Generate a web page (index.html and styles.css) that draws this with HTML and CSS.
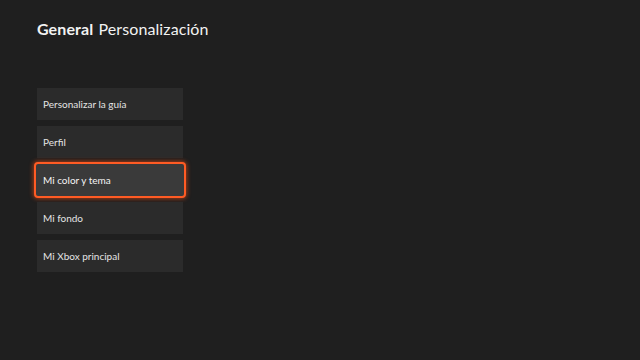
FILE: index.html
```html
<!DOCTYPE html>
<html lang="es">
<head>
  <meta charset="UTF-8" />
  <title>Personalización</title>
  <link rel="stylesheet" href="styles.css">
</head>
<body>
  <div class="screen">
    <h1 class="title"><span class="title-main">General</span> Personalización</h1>

    <nav class="menu">
      <div class="tile">Personalizar la guía</div>
      <div class="tile">Perfil</div>
      <div class="tile tile-focus">Mi color y tema</div>
      <div class="tile">Mi fondo</div>
      <div class="tile">Mi Xbox principal</div>
    </nav>
  </div>
</body>
</html>
```

FILE: styles.css
```css
html, body {
  margin: 0;
  height: 100%;
  background: #1f1f1f;
}
body {
  font-family: 'Lato', 'Noto Sans', sans-serif;
  color: #ececec;
}
.screen {
  padding: 16px 0 0 37px;
}
.title {
  margin: 0;
  font-size: 16px;
  font-weight: 400;
  line-height: 25px;
  letter-spacing: 0.1px;
  word-spacing: 1px;
  color: #f2f2f2;
}
.title-main {
  font-weight: 700;
}
.menu {
  margin-top: 47px;
  width: 146px;
  display: flex;
  flex-direction: column;
  gap: 6px;
}
.tile {
  height: 32px;
  box-sizing: border-box;
  padding: 0 6px;
  display: flex;
  align-items: center;
  background: #2b2b2b;
  font-size: 10px;
  color: #e4e4e4;
}
.tile-focus {
  margin: -2px -3px;
  height: 36px;
  padding-left: 7px;
  background: #3a3a3a;
  border: 2px solid #ff5b24;
  border-radius: 4px;
  box-shadow: 0 0 4px 1px rgba(255, 80, 20, 0.55);
  color: #f4f4f4;
}
```
